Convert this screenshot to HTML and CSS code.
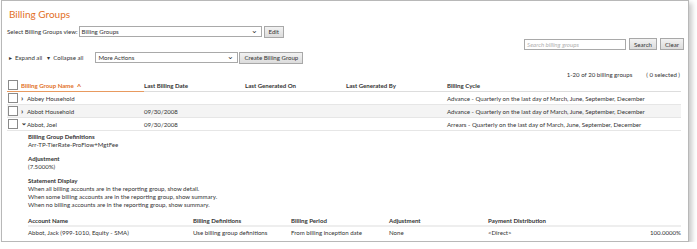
FILE: index.html
```html
<!DOCTYPE html>
<html lang="en">
<head>
    <meta charset="UTF-8">
    <title>Billing Groups</title>
    <link rel="stylesheet" href="styles.css">
</head>
<body>
    <div class="panel">
        <h1 class="title">Billing Groups</h1>

        <!-- View selector -->
        <div class="toolbar">
            <span class="label">Select Billing Groups view:</span>
            <div class="select view-select"><span>Billing Groups</span><span class="chev">&#8964;</span></div>
            <button class="btn">Edit</button>
        </div>

        <!-- Search -->
        <div class="search-row">
            <div class="search-box">Search billing groups</div>
            <button class="btn">Search</button>
            <button class="btn">Clear</button>
        </div>

        <!-- Actions -->
        <div class="toolbar actions">
            <span class="tree-link"><span class="tri">&#9656;</span>Expand all</span>
            <span class="tree-link"><span class="tri">&#9662;</span>Collapse all</span>
            <div class="select actions-select"><span>More Actions</span><span class="chev">&#8964;</span></div>
            <button class="btn create">Create Billing Group</button>
        </div>

        <div class="count-row">
            <span>1-20 of 20 billing groups</span>
            <span>( 0 selected )</span>
        </div>

        <!-- Groups table -->
        <div class="grid-row head">
            <div class="cell first sorted"><span class="check"></span>Billing Group Name <span class="sort">&#94;</span></div>
            <div class="cell">Last Billing Date</div>
            <div class="cell">Last Generated On</div>
            <div class="cell">Last Generated By</div>
            <div class="cell">Billing Cycle</div>
        </div>
        <div class="grid-row">
            <div class="cell first"><span class="check"></span><span class="arrow">&#8250;</span>Abbey Household</div>
            <div class="cell"></div>
            <div class="cell"></div>
            <div class="cell"></div>
            <div class="cell">Advance - Quarterly on the last day of March, June, September, December</div>
        </div>
        <div class="grid-row alt">
            <div class="cell first"><span class="check"></span><span class="arrow">&#8250;</span>Abbot Household</div>
            <div class="cell">09/30/2008</div>
            <div class="cell"></div>
            <div class="cell"></div>
            <div class="cell">Advance - Quarterly on the last day of March, June, September, December</div>
        </div>
        <div class="grid-row">
            <div class="cell first"><span class="check"></span><span class="arrow down">&#8964;</span>Abbot, Joel</div>
            <div class="cell">09/30/2008</div>
            <div class="cell"></div>
            <div class="cell"></div>
            <div class="cell">Arrears - Quarterly on the last day of March, June, September, December</div>
        </div>

        <!-- Expanded details for Abbot, Joel -->
        <div class="details">
            <div class="detail-block">
                <div class="detail-title">Billing Group Definitions</div>
                <div>Arr-TP-TierRate-ProFlow+MgtFee</div>
            </div>
            <div class="detail-block">
                <div class="detail-title">Adjustment</div>
                <div>(7.5000%)</div>
            </div>
            <div class="detail-block">
                <div class="detail-title">Statement Display</div>
                <div>When all billing accounts are in the reporting group, show detail.</div>
                <div>When some billing accounts are in the reporting group, show summary.</div>
                <div>When no billing accounts are in the reporting group, show summary.</div>
            </div>

            <div class="sub-row sub-head">
                <div>Account Name</div>
                <div>Billing Definitions</div>
                <div>Billing Period</div>
                <div>Adjustment</div>
                <div>Payment Distribution</div>
                <div></div>
            </div>
            <div class="sub-row">
                <div>Abbot, Jack (999-1010, Equity - SMA)</div>
                <div>Use billing group definitions</div>
                <div>From billing inception date</div>
                <div>None</div>
                <div>&lt;Direct&gt;</div>
                <div class="num">100.0000%</div>
            </div>
        </div>
    </div>
</body>
</html>
```

FILE: styles.css
```css
body {
    margin: 0;
    padding: 0 0 0 1px;
    background: #fff;
    font-family: "Lato", "Open Sans", sans-serif;
    font-size: 6.1px;
    color: #333;
}
.panel {
    width: 688px;
    height: 242px;
    box-sizing: border-box;
    border: 1px solid #b8b8b8;
    box-shadow: 3px 3px 5px rgba(0, 0, 0, 0.22);
    padding: 0 7px 0 5px;
}
.title {
    margin: 6px 0 0 2px;
    font-size: 10px;
    font-weight: normal;
    color: #e2701f;
    line-height: 14px;
}
.toolbar {
    display: flex;
    align-items: center;
    margin-top: 5px;
    height: 11px;
}
.label {
    margin-right: 1px;
}
.select {
    display: flex;
    justify-content: space-between;
    align-items: center;
    height: 11px;
    box-sizing: border-box;
    border: 1px solid #a9a9a9;
    padding: 0 3px 0 2px;
    background: #fff;
}
.chev {
    font-size: 8px;
    line-height: 6px;
    margin-top: -3px;
}
.view-select {
    width: 183px;
}
.btn {
    font-family: inherit;
    font-size: 6.1px;
    color: #333;
    height: 12px;
    margin-left: 2px;
    padding: 0 4px;
    border: 1px solid #a8a8a8;
    background: linear-gradient(#f2f2f2, #dcdcdc);
}
.search-row {
    display: flex;
    justify-content: flex-end;
    align-items: center;
    margin-top: 1px;
    margin-right: -3px;
    height: 12px;
}
.search-box {
    width: 102px;
    height: 11px;
    box-sizing: border-box;
    border: 1px solid #a9a9a9;
    padding-left: 2px;
    line-height: 9px;
    color: #b0b0b0;
    font-style: italic;
}
.search-row .btn {
    margin-left: 3px;
}
.actions {
    margin-top: 2px;
}
.tree-link {
    margin-left: 2px;
    margin-right: 3px;
}
.tri {
    font-size: 6px;
    margin-right: 3px;
}
.actions-select {
    width: 143px;
    margin-left: 9px;
}
.btn.create {
    margin-left: 1px;
}
.count-row {
    display: flex;
    justify-content: flex-end;
    gap: 14px;
    margin-top: 8px;
    padding-right: 1px;
}
.grid-row {
    display: grid;
    grid-template-columns: 137px 101px 101px 101px 1fr;
    height: 12px;
    align-items: center;
    border-bottom: 1px solid #e6e6e6;
}
.grid-row.alt {
    background: #f4f4f4;
}
.grid-row.head {
    margin-top: 1px;
    font-weight: bold;
    border-bottom: 1px solid #ddd;
}
.cell {
    display: flex;
    align-items: center;
    white-space: nowrap;
}
.cell.first {
    padding-left: 1px;
}
.sorted {
    color: #e2701f;
    height: 12px;
    box-sizing: border-box;
    border-bottom: 1px solid #e89a60;
    margin-bottom: -1px;
}
.sort {
    font-size: 8px;
    margin-left: 3px;
    margin-top: 3px;
}
.check {
    width: 8px;
    height: 8px;
    border: 1px solid #8a8a8a;
    background: #fff;
    margin-right: 3px;
}
.arrow {
    font-size: 8px;
    font-weight: bold;
    width: 5px;
    margin-right: 1px;
}
.arrow.down {
    font-size: 7px;
    margin-top: -4px;
}
.details {
    padding-left: 21px;
    padding-top: 2px;
}
.detail-block {
    margin-bottom: 6px;
    line-height: 8px;
}
.detail-title {
    font-weight: bold;
}
.sub-row {
    display: grid;
    grid-template-columns: 165px 98px 98px 99px 1fr 80px;
    height: 11px;
    align-items: center;
}
.sub-head {
    margin-top: 4px;
    font-weight: bold;
    border-bottom: 2px solid #eee;
    height: 10px;
}
.num {
    text-align: right;
}
```
